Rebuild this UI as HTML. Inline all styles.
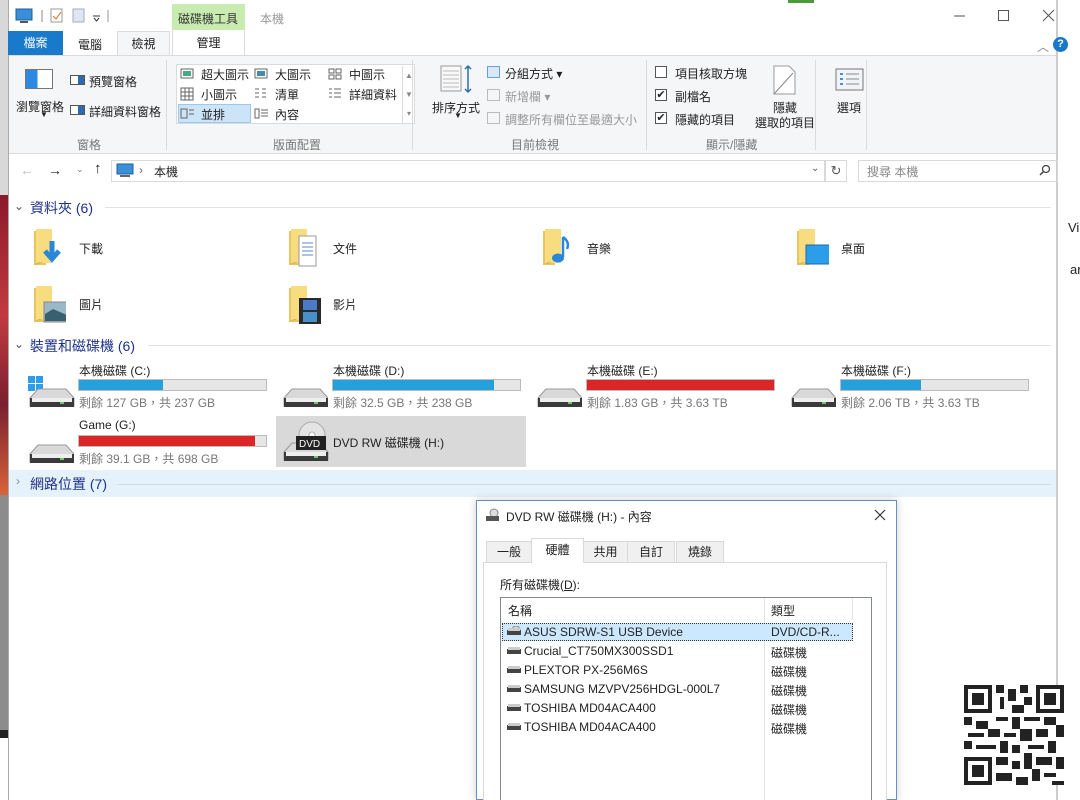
<!DOCTYPE html>
<html><head><meta charset="utf-8"><style>
*{margin:0;padding:0;box-sizing:border-box}
body{width:1080px;height:800px;overflow:hidden;background:#fff;position:relative;font-family:"Liberation Sans","Noto Sans CJK TC",sans-serif;font-size:12px;color:#222}
.a{position:absolute;white-space:nowrap}
.g{color:#777}
.bar{position:absolute;height:12px;background:#e6e6e6;border:1px solid #bcbcbc}
.bar i{display:block;height:100%;background:#26a0da}
.bar i.r{background:#da2626}
.fold{position:absolute;width:34px;height:40px}
.drv{position:absolute;width:46px;height:22px}
.tab{position:absolute;top:541px;height:22px;background:#f0f0f0;border:1px solid #d9d9d9;text-align:center;line-height:20px}
</style></head><body>
<div class="a" style="left:0;top:0;width:8px;height:195px;background:#d8d8d8"></div>
<div class="a" style="left:0;top:195px;width:8px;height:300px;background:linear-gradient(#8a1a2a,#c23a40 40%,#7a2030 70%,#d8643a)"></div>
<div class="a" style="left:0;top:495px;width:8px;height:235px;background:#8c8c8c"></div>
<div class="a" style="left:0;top:730px;width:8px;height:8px;background:#222"></div>
<div class="a" style="left:8px;top:0;width:1px;height:800px;background:#aaa"></div>
<div class="a" style="left:1056px;top:0;width:2px;height:800px;background:#ccc"></div>
<div class="a" style="left:1068px;top:220px;font-size:13px">Vi</div>
<div class="a" style="left:1070px;top:262px;font-size:13px">ar</div>
<div class="a" style="left:788px;top:0;width:26px;height:3px;background:#4a9a3a"></div>

<svg class="a" style="left:15px;top:8px" width="100" height="16"><rect x="1" y="1" width="16" height="11" fill="#3a8fd8" stroke="#1d5fa0"/><rect x="5" y="13" width="8" height="2" fill="#555"/><line x1="27" y1="2" x2="27" y2="14" stroke="#888"/><rect x="36" y="1" width="11" height="13" fill="#fff" stroke="#999"/><path d="M38 8l3 3 5-7" stroke="#d07020" fill="none"/><rect x="58" y="1" width="11" height="13" fill="#dde6f2" stroke="#aab"/><path d="M78 8h7M79 10l2.5 3 2.5-3" stroke="#333" fill="none"/><line x1="93" y1="2" x2="93" y2="14" stroke="#999"/></svg>
<div class="a" style="left:172px;top:4px;width:73px;height:26px;background:#c8ecb0"></div>
<div class="a" style="left:178px;top:10px;color:#333">磁碟機工具</div>
<div class="a" style="left:260px;top:10px;color:#999">本機</div>
<svg class="a" style="left:950px;top:8px" width="110" height="16"><path d="M4 8h11" stroke="#555"/><rect x="48.5" y="2.5" width="10" height="10" fill="none" stroke="#555"/><path d="M93 2l11 11M104 2L93 13" stroke="#555"/></svg>
<div class="a" style="left:8px;top:31px;width:55px;height:24px;background:#1979ca;color:#fff;text-align:center;line-height:24px">檔案</div>
<div class="a" style="left:78px;top:36px">電腦</div>
<div class="a" style="left:117px;top:31px;width:53px;height:25px;background:#f5f6f7;border:1px solid #dadbdc;border-bottom:none;text-align:center;line-height:24px">檢視</div>
<div class="a" style="left:172px;top:30px;width:73px;height:25px;border-left:1px solid #dadbdc;border-right:1px solid #dadbdc;text-align:center;line-height:26px">管理</div>
<div class="a" style="left:1037px;top:38px;color:#888">︿</div>
<div class="a" style="left:1053px;top:37px;width:15px;height:15px;border-radius:50%;background:#1a78c8;color:#fff;font-size:11px;font-weight:bold;text-align:center;line-height:15px">?</div>
<div class="a" style="left:9px;top:55px;width:1047px;height:99px;background:#f5f6f7;border-top:1px solid #dadbdc;border-bottom:1px solid #dadbdc"></div>
<div class="a" style="left:25px;top:69px;width:28px;height:20px;border:1px solid #777;background:linear-gradient(90deg,#2d8ae0 45%,#fff 45%)"></div>
<div class="a" style="left:16px;top:98px">瀏覽窗格</div>
<div class="a" style="left:40px;top:110px;font-size:8px">▼</div>
<div class="a" style="left:70px;top:75px;width:15px;height:10px;border:1px solid #555;background:linear-gradient(90deg,#fff 55%,#2d6ab0 55%)"></div>
<div class="a" style="left:89px;top:73px">預覽窗格</div>
<div class="a" style="left:70px;top:105px;width:15px;height:10px;border:1px solid #555;background:linear-gradient(90deg,#fff 55%,#2d6ab0 55%)"></div>
<div class="a" style="left:89px;top:103px">詳細資料窗格</div>
<div class="a g" style="left:77px;top:136px">窗格</div>
<div class="a" style="left:166px;top:60px;width:1px;height:90px;background:#dadbdc"></div>
<div class="a" style="left:176px;top:64px;width:239px;height:60px;border:1px solid #dadbdc;background:#fff"></div>
<div class="a" style="left:178px;top:104px;width:73px;height:19px;background:#cce4f7;border:1px solid #99c9ef"></div>
<div class="a" style="left:201px;top:66px">超大圖示</div><div class="a" style="left:275px;top:66px">大圖示</div><div class="a" style="left:349px;top:66px">中圖示</div>
<div class="a" style="left:201px;top:86px">小圖示</div><div class="a" style="left:275px;top:86px">清單</div><div class="a" style="left:349px;top:86px">詳細資料</div>
<div class="a" style="left:201px;top:106px">並排</div><div class="a" style="left:275px;top:106px">內容</div>
<svg class="a" style="left:180px;top:67px" width="170" height="54"><g fill="none" stroke="#666"><rect x="1" y="2" width="12" height="9"/><rect x="75" y="2" width="12" height="9"/><rect x="149" y="2" width="5" height="4"/><rect x="156" y="2" width="5" height="4"/><rect x="149" y="8" width="5" height="4"/><rect x="156" y="8" width="5" height="4"/><path d="M1 21h12v12H1zM5 21v12M9 21v12M1 25h12M1 29h12"/><path d="M75 22h4M75 26h4M75 30h4M82 22h4M82 26h4M82 30h4M149 22h3M149 26h3M149 30h3M154 22h7M154 26h7M154 30h7"/><rect x="1" y="42" width="6" height="9"/><path d="M9 43h5M9 47h5M75 42h4v9h-4zM81 43h7M81 46h7M81 49h7"/></g><rect x="3" y="4" width="8" height="5" fill="#4a8"/><rect x="77" y="4" width="8" height="5" fill="#48a"/></svg>
<div class="a" style="left:402px;top:66px;width:13px;height:58px;border-left:1px solid #dadbdc;color:#888;font-size:8px;text-align:center;line-height:19px">▲<br>▼<br>▾</div>
<div class="a g" style="left:273px;top:136px">版面配置</div>
<div class="a" style="left:412px;top:60px;width:1px;height:90px;background:#dadbdc"></div>
<svg class="a" style="left:440px;top:64px" width="34" height="30"><rect x="1" y="2" width="20" height="25" fill="#f8f8f8" stroke="#999"/><path d="M3 7h16M3 11h16M3 15h16M3 19h16M3 23h16" stroke="#bbb"/><path d="M28 2v26M25 5l3-3 3 3M25 25l3 3 3-3" stroke="#2a6fb0" fill="none" stroke-width="1.5"/></svg>
<div class="a" style="left:432px;top:99px">排序方式</div>
<div class="a" style="left:454px;top:111px;font-size:8px">▼</div>
<div class="a" style="left:487px;top:66px;width:13px;height:12px;border:1px solid #6aa0d0;background:#d8e8f8"></div>
<div class="a" style="left:505px;top:65px">分組方式 ▾</div>
<div class="a" style="left:487px;top:89px;width:13px;height:12px;border:1px solid #bbb"></div>
<div class="a" style="left:505px;top:88px;color:#999">新增欄 ▾</div>
<div class="a" style="left:487px;top:112px;width:13px;height:12px;border:1px solid #bbb"></div>
<div class="a" style="left:505px;top:111px;color:#999">調整所有欄位至最適大小</div>
<div class="a g" style="left:511px;top:136px">目前檢視</div>
<div class="a" style="left:646px;top:60px;width:1px;height:90px;background:#dadbdc"></div>
<div class="a" style="left:655px;top:66px;width:12px;height:12px;border:1px solid #555;background:#fff"></div>
<div class="a" style="left:675px;top:65px">項目核取方塊</div>
<div class="a" style="left:655px;top:89px;width:12px;height:12px;border:1px solid #555;background:#fff;font-size:11px;line-height:10px;text-align:center">✔</div>
<div class="a" style="left:675px;top:88px">副檔名</div>
<div class="a" style="left:655px;top:112px;width:12px;height:12px;border:1px solid #555;background:#fff;font-size:11px;line-height:10px;text-align:center">✔</div>
<div class="a" style="left:675px;top:111px">隱藏的項目</div>
<svg class="a" style="left:772px;top:64px" width="26" height="32"><path d="M2 2h15l6 6v22H2z" fill="#fff" stroke="#999"/><path d="M2 30L21 9" stroke="#888"/></svg>
<div class="a" style="left:773px;top:99px">隱藏</div>
<div class="a" style="left:755px;top:114px">選取的項目</div>
<div class="a g" style="left:706px;top:136px">顯示/隱藏</div>
<div class="a" style="left:815px;top:60px;width:1px;height:90px;background:#dadbdc"></div>
<svg class="a" style="left:835px;top:68px" width="30" height="24"><rect x="1" y="1" width="27" height="21" fill="#f0f4f8" stroke="#777"/><path d="M5 6h3M5 11h3M5 16h3" stroke="#4a90d0" stroke-width="2"/><path d="M11 6h13M11 11h13M11 16h13" stroke="#888"/></svg>
<div class="a" style="left:837px;top:99px">選項</div>
<div class="a" style="left:866px;top:60px;width:1px;height:90px;background:#dadbdc"></div>
<div class="a" style="left:20px;top:162px;color:#bbb;font-size:14px">←</div>
<div class="a" style="left:48px;top:162px;font-size:14px">→</div>
<div class="a" style="left:76px;top:164px;font-size:9px;color:#777">⌄</div>
<div class="a" style="left:94px;top:160px;font-size:15px">↑</div>
<div class="a" style="left:111px;top:160px;width:714px;height:22px;border:1px solid #d9d9d9"></div>
<div class="a" style="left:825px;top:160px;width:22px;height:22px;border:1px solid #d9d9d9;text-align:center;line-height:20px;color:#555;font-size:13px">↻</div>
<svg class="a" style="left:116px;top:163px" width="20" height="16"><rect x="1" y="1" width="16" height="10" fill="#3a8fd8" stroke="#1d5fa0"/><rect x="4" y="12" width="10" height="2" fill="#666"/></svg>
<div class="a" style="left:139px;top:163px;color:#666">›</div>
<div class="a" style="left:154px;top:163px">本機</div>
<div class="a" style="left:811px;top:163px;color:#555;font-size:10px">⌄</div>
<div class="a" style="left:858px;top:160px;width:200px;height:22px;border:1px solid #d9d9d9"></div>
<div class="a" style="left:867px;top:163px;color:#888">搜尋 本機</div>
<svg class="a" style="left:1038px;top:164px" width="14" height="14"><circle cx="8" cy="5" r="3.5" fill="none" stroke="#444" stroke-width="1.3"/><path d="M5.5 7.5L2 11" stroke="#444" stroke-width="1.5"/></svg>
<div class="a" style="left:14px;top:199px;color:#556">⌄</div>
<div class="a" style="left:30px;top:198px;font-size:14px;color:#1e3287">資料夾 (6)</div>
<div class="a" style="left:105px;top:207px;width:946px;height:1px;background:#e2e2e2"></div>
<div class="a" style="left:14px;top:337px;color:#556">⌄</div>
<div class="a" style="left:30px;top:336px;font-size:14px;color:#1e3287">裝置和磁碟機 (6)</div>
<div class="a" style="left:148px;top:345px;width:903px;height:1px;background:#e2e2e2"></div>
<div class="a" style="left:9px;top:470px;width:1047px;height:27px;background:#e5f1fb"></div>
<div class="a" style="left:16px;top:474px;color:#889">›</div>
<div class="a" style="left:30px;top:474px;font-size:14px;color:#1e3287">網路位置 (7)</div>
<div class="a" style="left:118px;top:484px;width:933px;height:1px;background:#d0dde8"></div>

<svg width="0" height="0" style="position:absolute"><defs><g id="f"><path d="M2 4h9l3 3v31H2z" fill="#e8c560"/><path d="M4 2h16v34H4z" fill="#f8dc80"/><path d="M2 38l5-3h4" fill="#d8b050"/></g></defs></svg>
<svg class="fold" style="left:32px;top:227px"><use href="#f"/><path d="M20 14v16M13 24l7 8 7-8" stroke="#2a86d8" stroke-width="5" fill="none"/></svg>
<svg class="fold" style="left:287px;top:227px"><use href="#f"/><path d="M12 9h17v30H12z" fill="#fff" stroke="#999"/><path d="M15 16h11M15 20h11M15 24h11M15 28h11" stroke="#5a8ac0"/></svg>
<svg class="fold" style="left:541px;top:227px"><use href="#f"/><path d="M22 10v20" stroke="#2a86d8" stroke-width="2.5"/><ellipse cx="17" cy="31" rx="6" ry="4.5" fill="#2a86d8"/><path d="M22 10q7 5 4 12" stroke="#2a86d8" stroke-width="2.5" fill="none"/></svg>
<svg class="fold" style="left:795px;top:227px"><use href="#f"/><rect x="11" y="18" width="27" height="19" fill="#2c9de8" stroke="#1a6ab0"/></svg>
<svg class="fold" style="left:32px;top:284px"><use href="#f"/><rect x="12" y="18" width="24" height="20" fill="#9ab8c8" stroke="#888"/><path d="M13 30l8-5 14 6v6H13z" fill="#3a6070"/></svg>
<svg class="fold" style="left:287px;top:284px"><use href="#f"/><rect x="12" y="14" width="22" height="26" fill="#2a2a2a"/><rect x="16" y="16" width="14" height="10" fill="#4a7ac8"/><rect x="16" y="28" width="14" height="10" fill="#4a90c8"/></svg>
<div class="a" style="left:79px;top:240px">下載</div>
<div class="a" style="left:333px;top:240px">文件</div>
<div class="a" style="left:587px;top:240px">音樂</div>
<div class="a" style="left:841px;top:240px">桌面</div>
<div class="a" style="left:79px;top:296px">圖片</div>
<div class="a" style="left:333px;top:296px">影片</div>

<svg width="0" height="0" style="position:absolute"><defs><g id="d"><path d="M2 12l8-9h28l8 9v8H2z" fill="#d9d9d9" stroke="#999"/><rect x="2" y="12" width="44" height="9" fill="#3a3a3a"/><rect x="4" y="12" width="40" height="4" fill="#eee"/><rect x="32" y="16" width="4" height="2" fill="#6c6"/></g></defs></svg>
<div class="a" style="left:276px;top:416px;width:250px;height:51px;background:#d9d9d9"></div>
<svg class="a" style="left:28px;top:376px" width="48" height="34"><rect x="0" y="0" width="7" height="7" fill="#2c9de8"/><rect x="8" y="0" width="7" height="7" fill="#2c9de8"/><rect x="0" y="8" width="7" height="7" fill="#2c9de8"/><rect x="8" y="8" width="7" height="7" fill="#2c9de8"/><g transform="translate(0,10)"><use href="#d"/></g></svg>
<svg class="a drv" style="left:282px;top:386px;height:24px"><use href="#d"/></svg>
<svg class="a drv" style="left:536px;top:386px;height:24px"><use href="#d"/></svg>
<svg class="a drv" style="left:790px;top:386px;height:24px"><use href="#d"/></svg>
<svg class="a drv" style="left:28px;top:442px;height:24px"><use href="#d"/></svg>
<svg class="a" style="left:282px;top:420px" width="48" height="44"><circle cx="30" cy="15" r="13" fill="#e4e4e4" stroke="#aaa"/><circle cx="30" cy="15" r="3" fill="#fff" stroke="#aaa"/><g transform="translate(0,20)"><use href="#d"/></g><rect x="14" y="16" width="30" height="14" fill="#222"/><text x="17" y="27" font-size="10" fill="#fff" font-family="Liberation Sans">DVD</text></svg>

<div class="a" style="left:79px;top:362px">本機磁碟 (C:)</div>
<div class="bar" style="left:78px;top:379px;width:189px"><i style="width:45%"></i></div>
<div class="a g" style="left:79px;top:394px">剩餘 127 GB，共 237 GB</div>
<div class="a" style="left:333px;top:362px">本機磁碟 (D:)</div>
<div class="bar" style="left:332px;top:379px;width:189px"><i style="width:86%"></i></div>
<div class="a g" style="left:333px;top:394px">剩餘 32.5 GB，共 238 GB</div>
<div class="a" style="left:587px;top:362px">本機磁碟 (E:)</div>
<div class="bar" style="left:586px;top:379px;width:189px"><i class="r" style="width:100%"></i></div>
<div class="a g" style="left:587px;top:394px">剩餘 1.83 GB，共 3.63 TB</div>
<div class="a" style="left:841px;top:362px">本機磁碟 (F:)</div>
<div class="bar" style="left:840px;top:379px;width:189px"><i style="width:43%"></i></div>
<div class="a g" style="left:841px;top:394px">剩餘 2.06 TB，共 3.63 TB</div>
<div class="a" style="left:79px;top:418px">Game (G:)</div>
<div class="bar" style="left:78px;top:435px;width:189px"><i class="r" style="width:94%"></i></div>
<div class="a g" style="left:79px;top:450px">剩餘 39.1 GB，共 698 GB</div>
<div class="a" style="left:333px;top:434px">DVD RW 磁碟機 (H:)</div>

<!-- dialog -->
<div class="a" style="left:476px;top:500px;width:421px;height:300px;background:#fff;border:1px solid #6a8fb8;box-shadow:0 0 8px rgba(0,0,0,.2)"></div>
<svg class="a" style="left:485px;top:508px" width="16" height="14"><circle cx="9" cy="5" r="4" fill="#ddd" stroke="#888"/><rect x="1" y="8" width="13" height="5" fill="#555"/></svg>
<div class="a" style="left:506px;top:508px">DVD RW 磁碟機 (H:) - 內容</div>
<svg class="a" style="left:874px;top:509px" width="12" height="12"><path d="M1 1l10 10M11 1L1 11" stroke="#333" stroke-width="1.2"/></svg>
<div class="a" style="left:483px;top:562px;width:404px;height:238px;background:#fff;border:1px solid #d9d9d9;border-bottom:none"></div>
<div class="tab" style="left:486px;width:46px">一般</div>
<div class="tab" style="left:627px;width:48px">自訂</div>
<div class="tab" style="left:583px;width:45px">共用</div>
<div class="tab" style="left:676px;width:48px">燒錄</div>
<div class="a" style="left:531px;top:538px;width:53px;height:25px;background:#fff;border:1px solid #d9d9d9;border-bottom:none;text-align:center;line-height:22px">硬體</div>
<div class="a" style="left:500px;top:576px">所有磁碟機(<u>D</u>):</div>
<div class="a" style="left:500px;top:597px;width:372px;height:203px;border:1px solid #828790;border-bottom:none"></div>
<div class="a" style="left:764px;top:598px;width:1px;height:202px;background:#e5e5e5"></div>
<div class="a" style="left:852px;top:598px;width:1px;height:22px;background:#e5e5e5"></div>
<div class="a" style="left:508px;top:602px">名稱</div>
<div class="a" style="left:771px;top:602px">類型</div>
<div class="a" style="left:502px;top:623px;width:351px;height:18px;background:#cce8ff;border:1px dotted #333"></div>
<svg width="0" height="0" style="position:absolute"><defs><g id="h"><rect x="0" y="4" width="14" height="5" fill="#444"/><rect x="1" y="2" width="12" height="3" fill="#ccc"/></g></defs></svg>
<svg class="a" style="left:507px;top:626px" width="16" height="12"><circle cx="9" cy="4" r="4" fill="#ddd" stroke="#888"/><use href="#h"/></svg>
<div class="a" style="left:524px;top:625px">ASUS SDRW-S1 USB Device</div><div class="a" style="left:771px;top:625px">DVD/CD-R...</div>
<svg class="a" style="left:507px;top:645px" width="16" height="12"><use href="#h"/></svg>
<div class="a" style="left:524px;top:644px">Crucial_CT750MX300SSD1</div><div class="a" style="left:771px;top:644px">磁碟機</div>
<svg class="a" style="left:507px;top:664px" width="16" height="12"><use href="#h"/></svg>
<div class="a" style="left:524px;top:663px">PLEXTOR PX-256M6S</div><div class="a" style="left:771px;top:663px">磁碟機</div>
<svg class="a" style="left:507px;top:683px" width="16" height="12"><use href="#h"/></svg>
<div class="a" style="left:524px;top:682px">SAMSUNG MZVPV256HDGL-000L7</div><div class="a" style="left:771px;top:682px">磁碟機</div>
<svg class="a" style="left:507px;top:702px" width="16" height="12"><use href="#h"/></svg>
<div class="a" style="left:524px;top:701px">TOSHIBA MD04ACA400</div><div class="a" style="left:771px;top:701px">磁碟機</div>
<svg class="a" style="left:507px;top:721px" width="16" height="12"><use href="#h"/></svg>
<div class="a" style="left:524px;top:720px">TOSHIBA MD04ACA400</div><div class="a" style="left:771px;top:720px">磁碟機</div>

<svg class="a" style="left:964px;top:685px" width="100" height="100" viewBox="0 0 25 25" shape-rendering="crispEdges"><rect width="25" height="25" fill="#fff"/><g fill="#222"><path d="M0 0h7v7H0zM1 1v5h5V1zM2 2h3v3H2zM18 0h7v7h-7zM19 1v5h5V1zM20 2h3v3h-3zM0 18h7v7H0zM1 19v5h5v-5zM2 20h3v3H2z" fill-rule="evenodd"/><path d="M8 0h2v2H8zM11 1h2v3h-2zM14 0h2v2h-2zM9 3h1v3H9zM12 5h3v2h-3zM15 3h2v2h-2zM8 8h3v1H8zM0 8h2v2H0zM3 9h3v2H3zM12 8h2v3h-2zM15 8h4v1h-4zM20 8h3v2h-3zM23 10h2v3h-2zM1 12h4v1H1zM6 11h3v2H6zM10 12h3v1h-3zM14 11h3v3h-3zM18 11h3v2h-3zM0 14h2v2H0zM3 15h5v1H3zM9 14h2v3H9zM12 15h2v2h-2zM16 15h4v1h-4zM21 14h2v3h-2zM8 18h3v2H8zM12 19h2v2h-2zM15 17h2v4h-2zM18 18h4v2h-4zM23 18h2v3h-2zM8 22h4v2H8zM13 23h3v2h-3zM17 21h2v3h-2zM20 22h3v1h-3zM22 24h3v1h-3z"/></g></svg>
</body></html>
